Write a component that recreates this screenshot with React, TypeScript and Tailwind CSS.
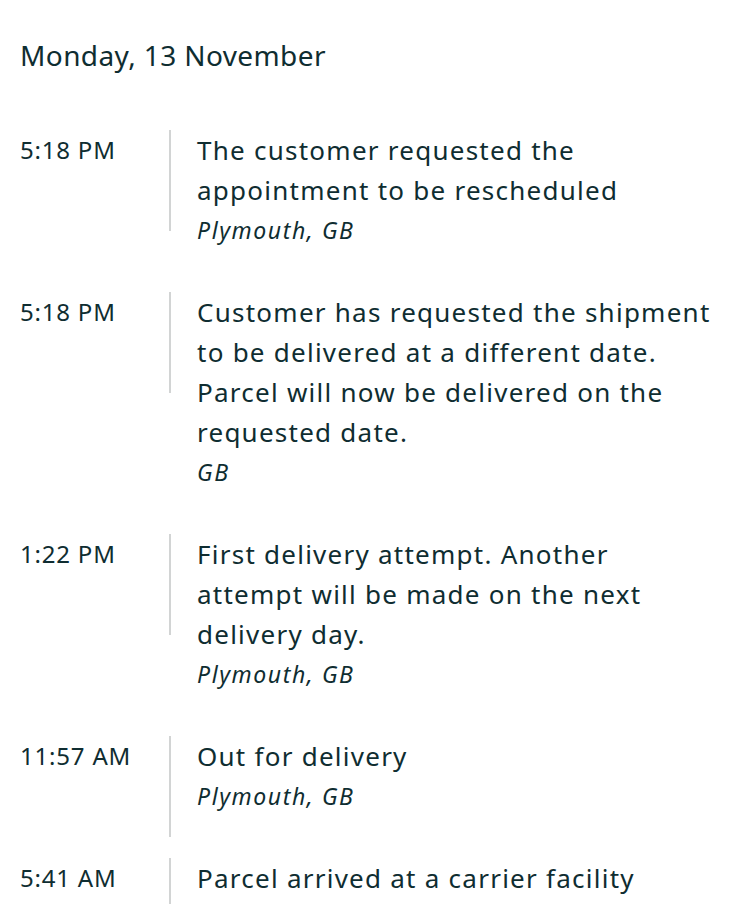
import React from "react";

type Event = {
  time: string;
  lines: string[];
  place: string;
};

const events: Event[] = [
  {
    time: "5:18 PM",
    lines: ["The customer requested the", "appointment to be rescheduled"],
    place: "Plymouth, GB",
  },
  {
    time: "5:18 PM",
    lines: [
      "Customer has requested the shipment",
      "to be delivered at a different date.",
      "Parcel will now be delivered on the",
      "requested date.",
    ],
    place: "GB",
  },
  {
    time: "1:22 PM",
    lines: [
      "First delivery attempt. Another",
      "attempt will be made on the next",
      "delivery day.",
    ],
    place: "Plymouth, GB",
  },
  {
    time: "11:57 AM",
    lines: ["Out for delivery"],
    place: "Plymouth, GB",
  },
  {
    time: "5:41 AM",
    lines: ["Parcel arrived at a carrier facility"],
    place: "",
  },
];

function Row({ e }: { e: Event }) {
  return (
    <div className="flex items-start">
      <div className="w-[149px] shrink-0 pt-[4px] text-[24px] leading-[32px] tracking-[0.8px]">
        {e.time}
      </div>
      <div className="h-[101px] w-[2px] shrink-0 bg-[#d2d4d4]" />
      <div className="min-w-0 flex-1 pb-[42px] pl-[26px]">
        <div className="whitespace-nowrap text-[26px] leading-[40px] tracking-[1.25px]">
          {e.lines.map((l, i) => (
            <div key={i}>{l}</div>
          ))}
        </div>
        {e.place && (
          <div className="text-[23px] italic leading-[40px] tracking-[1.6px]">{e.place}</div>
        )}
      </div>
    </div>
  );
}

export default function App() {
  return (
    <div
      className="h-[904px] w-[750px] overflow-hidden bg-white px-5 pt-[35px] text-[#0f2d31]"
      style={{ fontFamily: '"Noto Sans", "Open Sans", sans-serif' }}
    >
      <h1 className="text-[28px] leading-[40px] tracking-[0.4px]">Monday, 13 November</h1>
      <div className="mt-[55px] flex flex-col">
        {events.map((e, i) => (
          <Row key={i} e={e} />
        ))}
      </div>
    </div>
  );
}
